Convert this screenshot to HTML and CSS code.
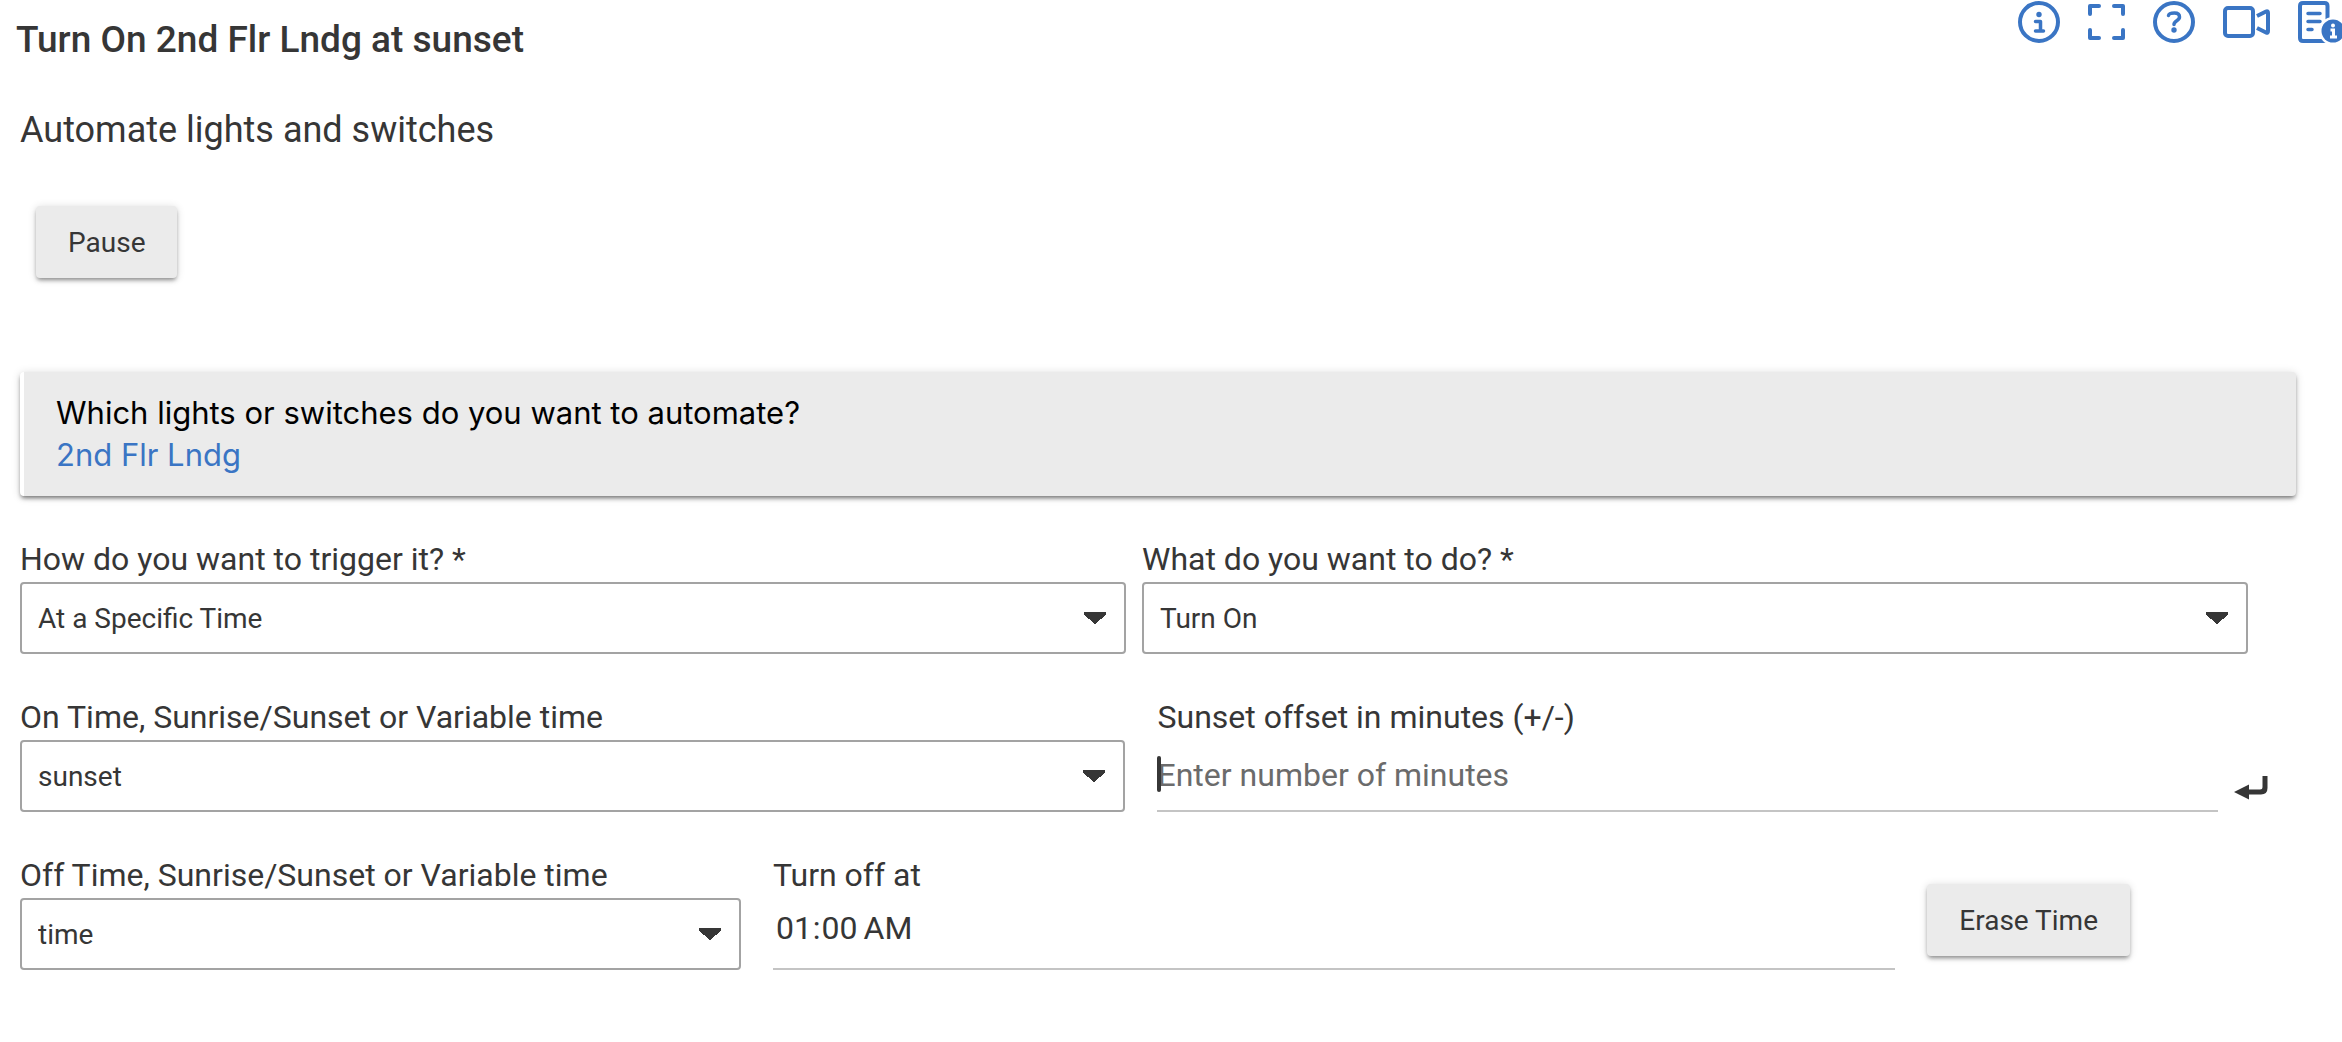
FILE: index.html
```html
<!DOCTYPE html>
<html lang="en">
<head>
<meta charset="UTF-8" />
<title>Turn On 2nd Flr Lndg at sunset</title>
<link rel="stylesheet" href="styles.css">
</head>
<body>
<header>
<h1>Turn On 2nd Flr Lndg at sunset</h1>
<nav class="icons">
<a href="#info" title="Info"><svg width="42" height="42" viewBox="0 0 42 42"><circle cx="21" cy="21" r="19" class="line"/><circle cx="21" cy="13.500" r="2.700" class="solid"/><path d="M17.500 20.500h5v9M17.500 30h8" class="line thin"/></svg></a>
<a href="#fullscreen" title="Full screen"><svg width="37" height="42" viewBox="0 0 37 42"><path d="M2 13V5h9M26 5h9v8M35 29v8h-9M11 37H2v-8" class="line"/></svg></a>
<a href="#help" title="Help"><svg width="42" height="42" viewBox="0 0 42 42"><circle cx="21" cy="21" r="19" class="line"/><path d="M15.500 14.500C16 12 19 12 21.500 12c3 0 5 1.500 5 4 0 4-5.500 3.500-5.500 7.500" class="line thin"/><circle cx="21" cy="29" r="2.700" class="solid"/></svg></a>
<a href="#video" title="Video"><svg width="47" height="42" viewBox="0 0 47 42"><rect x="2" y="7" width="28" height="28" rx="3" class="line"/><path d="M34 15 43 10.500Q45 9.500 45 12V30Q45 32.500 43 31.500L34 27" class="line flat"/></svg></a>
<a href="#docs" title="Documentation"><svg width="44" height="42" viewBox="0 0 44 42"><path d="M29.500 20V5q0-3-3-3H5Q2 2 2 5v32q0 3 3 3h24" class="line"/><path d="M10 12.500h12M10 20.500h12M10 28.500h4" class="line thin"/><circle cx="35" cy="30" r="14" class="hole"/><circle cx="35" cy="30" r="11.500" class="solid"/><circle cx="35" cy="24.500" r="2" class="hole"/><path d="M32.500 29h3v6.500M32 36h7" class="hole-line"/></svg></a>
</nav>
</header>

<main>
<h2>Automate lights and switches</h2>
<button type="button" class="btn pause">Pause</button>

<section class="card">
<p>Which lights or switches do you want to automate?</p>
<a href="#devices">2nd Flr Lndg</a>
</section>

<form>
<div class="row row-trigger">
<div class="field">
<label for="trigger">How do you want to trigger it? *</label>
<select id="trigger"><option>At a Specific Time</option></select>
</div>
<div class="field">
<label for="action">What do you want to do? *</label>
<select id="action"><option>Turn On</option></select>
</div>
</div>

<div class="row row-on">
<div class="field">
<label for="ontime">On Time, Sunrise/Sunset or Variable time</label>
<select id="ontime"><option>sunset</option></select>
</div>
<div class="field offset">
<label for="offset">Sunset offset in minutes (+/-)</label>
<input type="text" id="offset" placeholder="Enter number of minutes"/>
<span class="caret"></span>
</div>
<button type="submit" class="enter" title="Save"><svg width="34" height="24" viewBox="0 0 34 24"><path d="M0 16 15 8.500V13.500H26Q28.500 13.500 28.500 11V0H33.500V12Q33.500 18.500 27 18.500H15V23.500Z"/></svg></button>
</div>

<div class="row row-off">
<div class="field">
<label for="offtime">Off Time, Sunrise/Sunset or Variable time</label>
<select id="offtime"><option>time</option></select>
</div>
<div class="field">
<label for="turnoff">Turn off at</label>
<input type="time" id="turnoff" value="01:00"/>
</div>
<button type="button" class="btn erase">Erase Time</button>
</div>
</form>
</main>
</body>
</html>
```
FILE: styles.css
```css
* {
	box-sizing: border-box;
	margin: 0;
	padding: 0;
}

body {
	background: #fff;
	color: #363636;
	font: 32px/46px Roboto, "Liberation Sans", sans-serif;
	overflow-x: hidden;
}

header {
	display: flex;
	justify-content: space-between;
	padding-left: 16px;
}

h1 {
	margin-top: 16px;
	font-size: 37px;
	font-weight: 500;
	line-height: 48px;
}

.icons {
	display: flex;
	gap: 28px;
	padding-top: 1px;
}

.icons a, .icons svg {
	display: block;
}

.line {
	fill: none;
	stroke: #3a75c4;
	stroke-width: 4;
	stroke-linecap: round;
	stroke-linejoin: round;
}

.thin {
	stroke-width: 3.5;
}

.flat {
	stroke-linecap: butt;
}

.solid {
	fill: #3a75c4;
}

.hole {
	fill: #fff;
}

.hole-line {
	fill: none;
	stroke: #fff;
	stroke-width: 3;
}

main {
	padding: 42px 46px 40px 20px;
}

h2 {
	font-size: 36px;
	font-weight: 400;
	line-height: 48px;
}

.btn {
	display: block;
	height: 72px;
	padding: 0 32px;
	background: #ebebeb;
	border: none;
	border-radius: 4px;
	box-shadow: 0 3px 4px -1px rgba(0, 0, 0, .4), 0 1px 8px rgba(0, 0, 0, .14);
	color: inherit;
	font: 28px Roboto, "Liberation Sans", sans-serif;
	white-space: nowrap;
}

.pause {
	margin: 52px 0 0 16px;
}

.card {
	margin: 94px 0 40px;
	padding: 20px 32px;
	background: #ebebeb;
	border-left: 4px solid #fff;
	border-radius: 4px;
	box-shadow: 0 3px 4px -1px rgba(0, 0, 0, .5), 0 1px 10px rgba(0, 0, 0, .14);
	color: #000;
	font-family: Inter, "Liberation Sans", sans-serif;
	font-size: 31px;
	line-height: 42px;
}

.card a {
	color: #3a75c4;
	text-decoration: none;
}

.row {
	display: grid;
	align-items: start;
	margin-bottom: 40px;
}

.row-trigger {
	grid-template-columns: 1fr 1fr;
	gap: 16px;
	padding-right: 48px;
}

.row-on {
	grid-template-columns: 1106fr 1077fr auto;
	column-gap: 16px;
	padding-right: 28px;
}

.row-off {
	grid-template-columns: 720fr 1121fr auto;
	column-gap: 32px;
	padding-right: 166px;
}

.field {
	position: relative;
	min-width: 0;
}

.offset {
	margin-left: 16px;
}

label {
	display: block;
}

select, input {
	display: block;
	width: 100%;
	height: 72px;
	color: inherit;
	font-family: inherit;
}

select {
	appearance: none;
	padding: 0 16px;
	background: #fff;
	background-image: conic-gradient(from -50deg at 50% 100%, #363636 100deg, transparent 0);
	background-position: right 18px center;
	background-repeat: no-repeat;
	background-size: 22px 12px;
	border: 2px solid #a3a3a3;
	border-radius: 4px;
	font-size: 28px;
}

input {
	background: none;
	border: none;
	border-bottom: 2px solid #c4c4c4;
	font-size: 32px;
	outline: none;
}

input::placeholder {
	color: #6b6b6b;
}

input[type=time] {
	padding: 0 2px 10px;
}

input[type=time]::-webkit-datetime-edit-hour-field,
input[type=time]::-webkit-datetime-edit-minute-field,
input[type=time]::-webkit-datetime-edit-ampm-field {
	padding: 0 1px;
}

input[type=time]::-webkit-calendar-picker-indicator {
	display: none;
}

/* insertion point at the start of the empty box */
.caret {
	position: absolute;
	left: 0;
	bottom: 20px;
	width: 4px;
	height: 36px;
	background: #363636;
	border-radius: 2px;
}

.enter {
	margin-top: 82px;
	background: none;
	border: none;
}

.enter svg {
	display: block;
	fill: #363636;
}

.erase {
	margin-top: 32px;
}
```
